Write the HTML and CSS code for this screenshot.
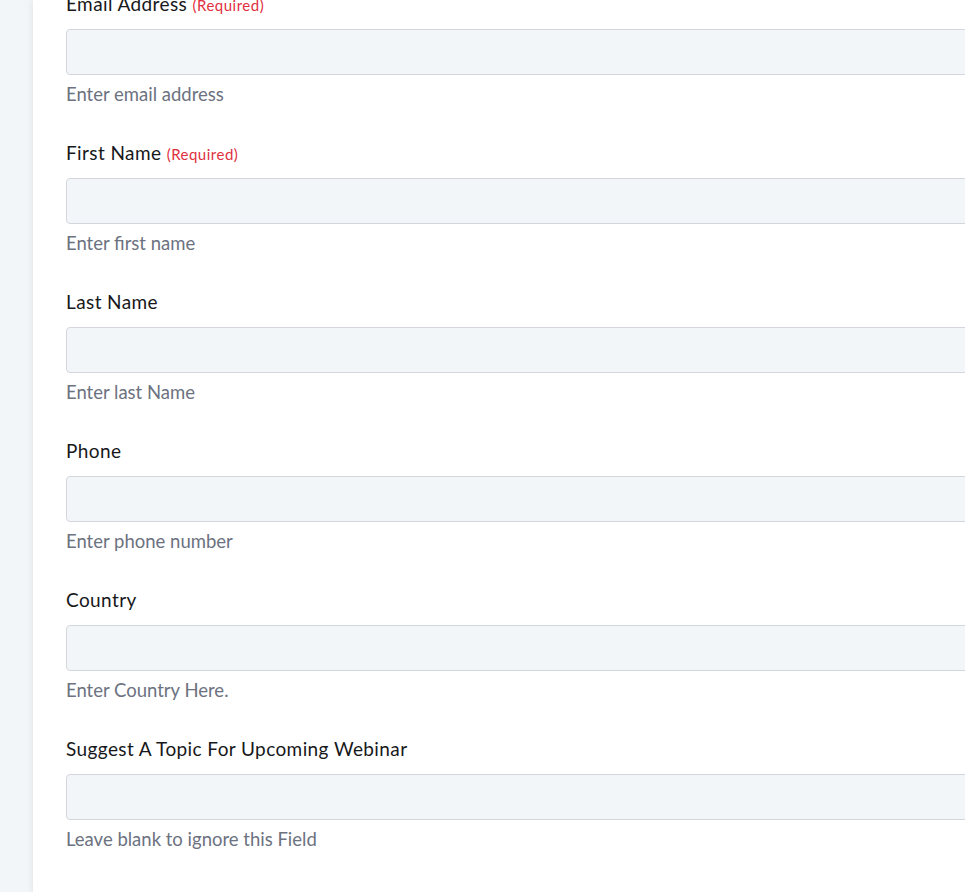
FILE: index.html
```html
<!DOCTYPE html>
<html lang="en">
<head>
  <meta charset="UTF-8">
  <meta name="viewport" content="width=device-width, initial-scale=1.0">
  <title>Webinar Registration</title>
  <link rel="stylesheet" href="styles.css">
</head>
<body>
  <div class="side"></div>
  <div class="panel">
    <form class="form">
      <div class="field">
        <label for="email">Email Address <span class="req">(Required)</span></label>
        <input type="email" id="email">
        <p class="help">Enter email address</p>
      </div>
      <div class="field">
        <label for="first">First Name <span class="req">(Required)</span></label>
        <input type="text" id="first">
        <p class="help">Enter first name</p>
      </div>
      <div class="field">
        <label for="last">Last Name</label>
        <input type="text" id="last">
        <p class="help">Enter last Name</p>
      </div>
      <div class="field">
        <label for="phone">Phone</label>
        <input type="tel" id="phone">
        <p class="help">Enter phone number</p>
      </div>
      <div class="field">
        <label for="country">Country</label>
        <input type="text" id="country">
        <p class="help">Enter Country Here.</p>
      </div>
      <div class="field">
        <label for="topic">Suggest A Topic For Upcoming Webinar</label>
        <input type="text" id="topic">
        <p class="help">Leave blank to ignore this Field</p>
      </div>
    </form>
  </div>
</body>
</html>
```

FILE: styles.css
```css
* {
  margin: 0;
  padding: 0;
  box-sizing: border-box;
}

body {
  display: flex;
  min-height: 100vh;
  overflow: hidden;
  background-color: #f3f6f9;
  font-family: "Lato", "Liberation Sans", sans-serif;
}

.side {
  flex: none;
  width: 33px;
}

.panel {
  flex: none;
  width: 1000px;
  background-color: #fff;
  box-shadow: -2px 0 6px rgba(0, 0, 0, 0.06);
  padding-left: 33px;
}

.form {
  margin-top: -8px;
}

.field {
  display: flex;
  flex-direction: column;
  margin-bottom: 35px;
}

.field label {
  display: block;
  height: 24px;
  font-size: 19px;
  line-height: 24px;
  letter-spacing: 0.4px;
  color: #17181b;
  margin-bottom: 13px;
}

.req {
  font-size: 15px;
  line-height: 1;
  letter-spacing: 0.5px;
  color: #e0303f;
}

.field input {
  width: 100%;
  height: 46px;
  border: 1px solid #d3d6dc;
  border-radius: 4px;
  background-color: #f3f6f9;
  font-size: 16px;
  padding: 0 12px;
}

.help {
  margin-top: 7px;
  font-size: 18.5px;
  line-height: 24px;
  color: #6c7280;
}
```
